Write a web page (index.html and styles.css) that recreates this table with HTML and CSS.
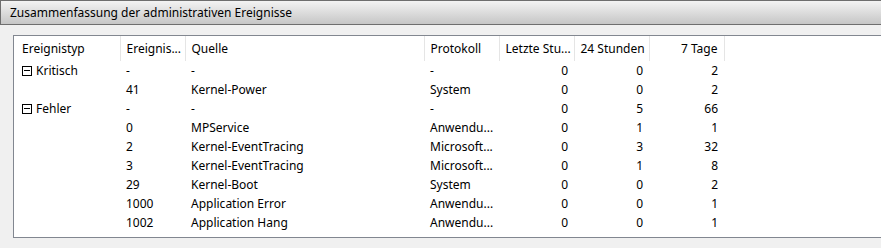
FILE: index.html
```html
<!DOCTYPE html>
<html lang="de">
<head>
    <meta charset="UTF-8">
    <title>Zusammenfassung der administrativen Ereignisse</title>
    <link rel="stylesheet" href="styles.css">
</head>
<body>
    <div class="titlebar">Zusammenfassung der administrativen Ereignisse</div>

    <div class="panel">
        <div class="listview">
            <table class="events">
                <colgroup>
                    <col class="c-type">
                    <col class="c-id">
                    <col class="c-src">
                    <col class="c-log">
                    <col class="c-num">
                    <col class="c-num">
                    <col class="c-num">
                    <col>
                </colgroup>
                <thead>
                    <tr>
                        <th>Ereignistyp</th>
                        <th>Ereignis...</th>
                        <th>Quelle</th>
                        <th>Protokoll</th>
                        <th class="num">Letzte Stu...</th>
                        <th class="num">24 Stunden</th>
                        <th class="num">7 Tage</th>
                        <th class="filler"></th>
                    </tr>
                </thead>
                <tbody>
                    <tr>
                        <td><span class="toggle"></span>Kritisch</td>
                        <td>-</td><td>-</td><td>-</td>
                        <td class="num">0</td><td class="num">0</td><td class="num">2</td><td></td>
                    </tr>
                    <tr>
                        <td></td>
                        <td>41</td><td>Kernel-Power</td><td>System</td>
                        <td class="num">0</td><td class="num">0</td><td class="num">2</td><td></td>
                    </tr>
                    <tr>
                        <td><span class="toggle"></span>Fehler</td>
                        <td>-</td><td>-</td><td>-</td>
                        <td class="num">0</td><td class="num">5</td><td class="num">66</td><td></td>
                    </tr>
                    <tr>
                        <td></td>
                        <td>0</td><td>MPService</td><td>Anwendu...</td>
                        <td class="num">0</td><td class="num">1</td><td class="num">1</td><td></td>
                    </tr>
                    <tr>
                        <td></td>
                        <td>2</td><td>Kernel-EventTracing</td><td>Microsoft...</td>
                        <td class="num">0</td><td class="num">3</td><td class="num">32</td><td></td>
                    </tr>
                    <tr>
                        <td></td>
                        <td>3</td><td>Kernel-EventTracing</td><td>Microsoft...</td>
                        <td class="num">0</td><td class="num">1</td><td class="num">8</td><td></td>
                    </tr>
                    <tr>
                        <td></td>
                        <td>29</td><td>Kernel-Boot</td><td>System</td>
                        <td class="num">0</td><td class="num">0</td><td class="num">2</td><td></td>
                    </tr>
                    <tr>
                        <td></td>
                        <td>1000</td><td>Application Error</td><td>Anwendu...</td>
                        <td class="num">0</td><td class="num">0</td><td class="num">1</td><td></td>
                    </tr>
                    <tr>
                        <td></td>
                        <td>1002</td><td>Application Hang</td><td>Anwendu...</td>
                        <td class="num">0</td><td class="num">0</td><td class="num">1</td><td></td>
                    </tr>
                </tbody>
            </table>
        </div>
    </div>
</body>
</html>
```

FILE: styles.css
```css
body, html {
    margin: 0;
    padding: 0;
    font-family: 'Noto Sans', 'Open Sans', sans-serif;
    font-size: 12px;
    color: #000;
    background-color: #f0f0f0;
}

.titlebar {
    height: 23px;
    line-height: 23px;
    padding-left: 9px;
    border-top: 1px solid #6e6e6e;
    border-bottom: 1px solid #6e6e6e;
    border-left: 1px solid #6e6e6e;
    background: linear-gradient(to bottom, #f3f3f3, #c6c6c6);
    white-space: nowrap;
}

.panel {
    padding: 10px 0 10px 13px;
}

.listview {
    height: 201px;
    background-color: #fff;
    border: 1px solid #828790;
    border-right: none;
    overflow: hidden;
}

.events {
    width: 100%;
    table-layout: fixed;
    border-collapse: collapse;
}

.c-type { width: 106px; }
.c-id { width: 65px; }
.c-src { width: 239px; }
.c-log { width: 75px; }
.c-num { width: 75px; }

.events th {
    height: 25px;
    padding: 0 6px;
    font-weight: normal;
    text-align: left;
    border-right: 1px solid #e5e5e5;
    white-space: nowrap;
    overflow: hidden;
}

.events th:first-child {
    padding-left: 8px;
}

.events th.filler {
    border-right: none;
}

.events td {
    height: 19px;
    padding: 0 6px;
    white-space: nowrap;
    overflow: hidden;
}

.events td:first-child {
    padding-left: 8px;
}

.events .num {
    text-align: right;
}

.toggle {
    display: inline-block;
    position: relative;
    width: 8px;
    height: 8px;
    border: 1px solid #000;
    margin-right: 4px;
    vertical-align: -1px;
}

.toggle::after {
    content: '';
    position: absolute;
    left: 1px;
    right: 1px;
    top: 3px;
    height: 1px;
    background-color: #000;
}
```
